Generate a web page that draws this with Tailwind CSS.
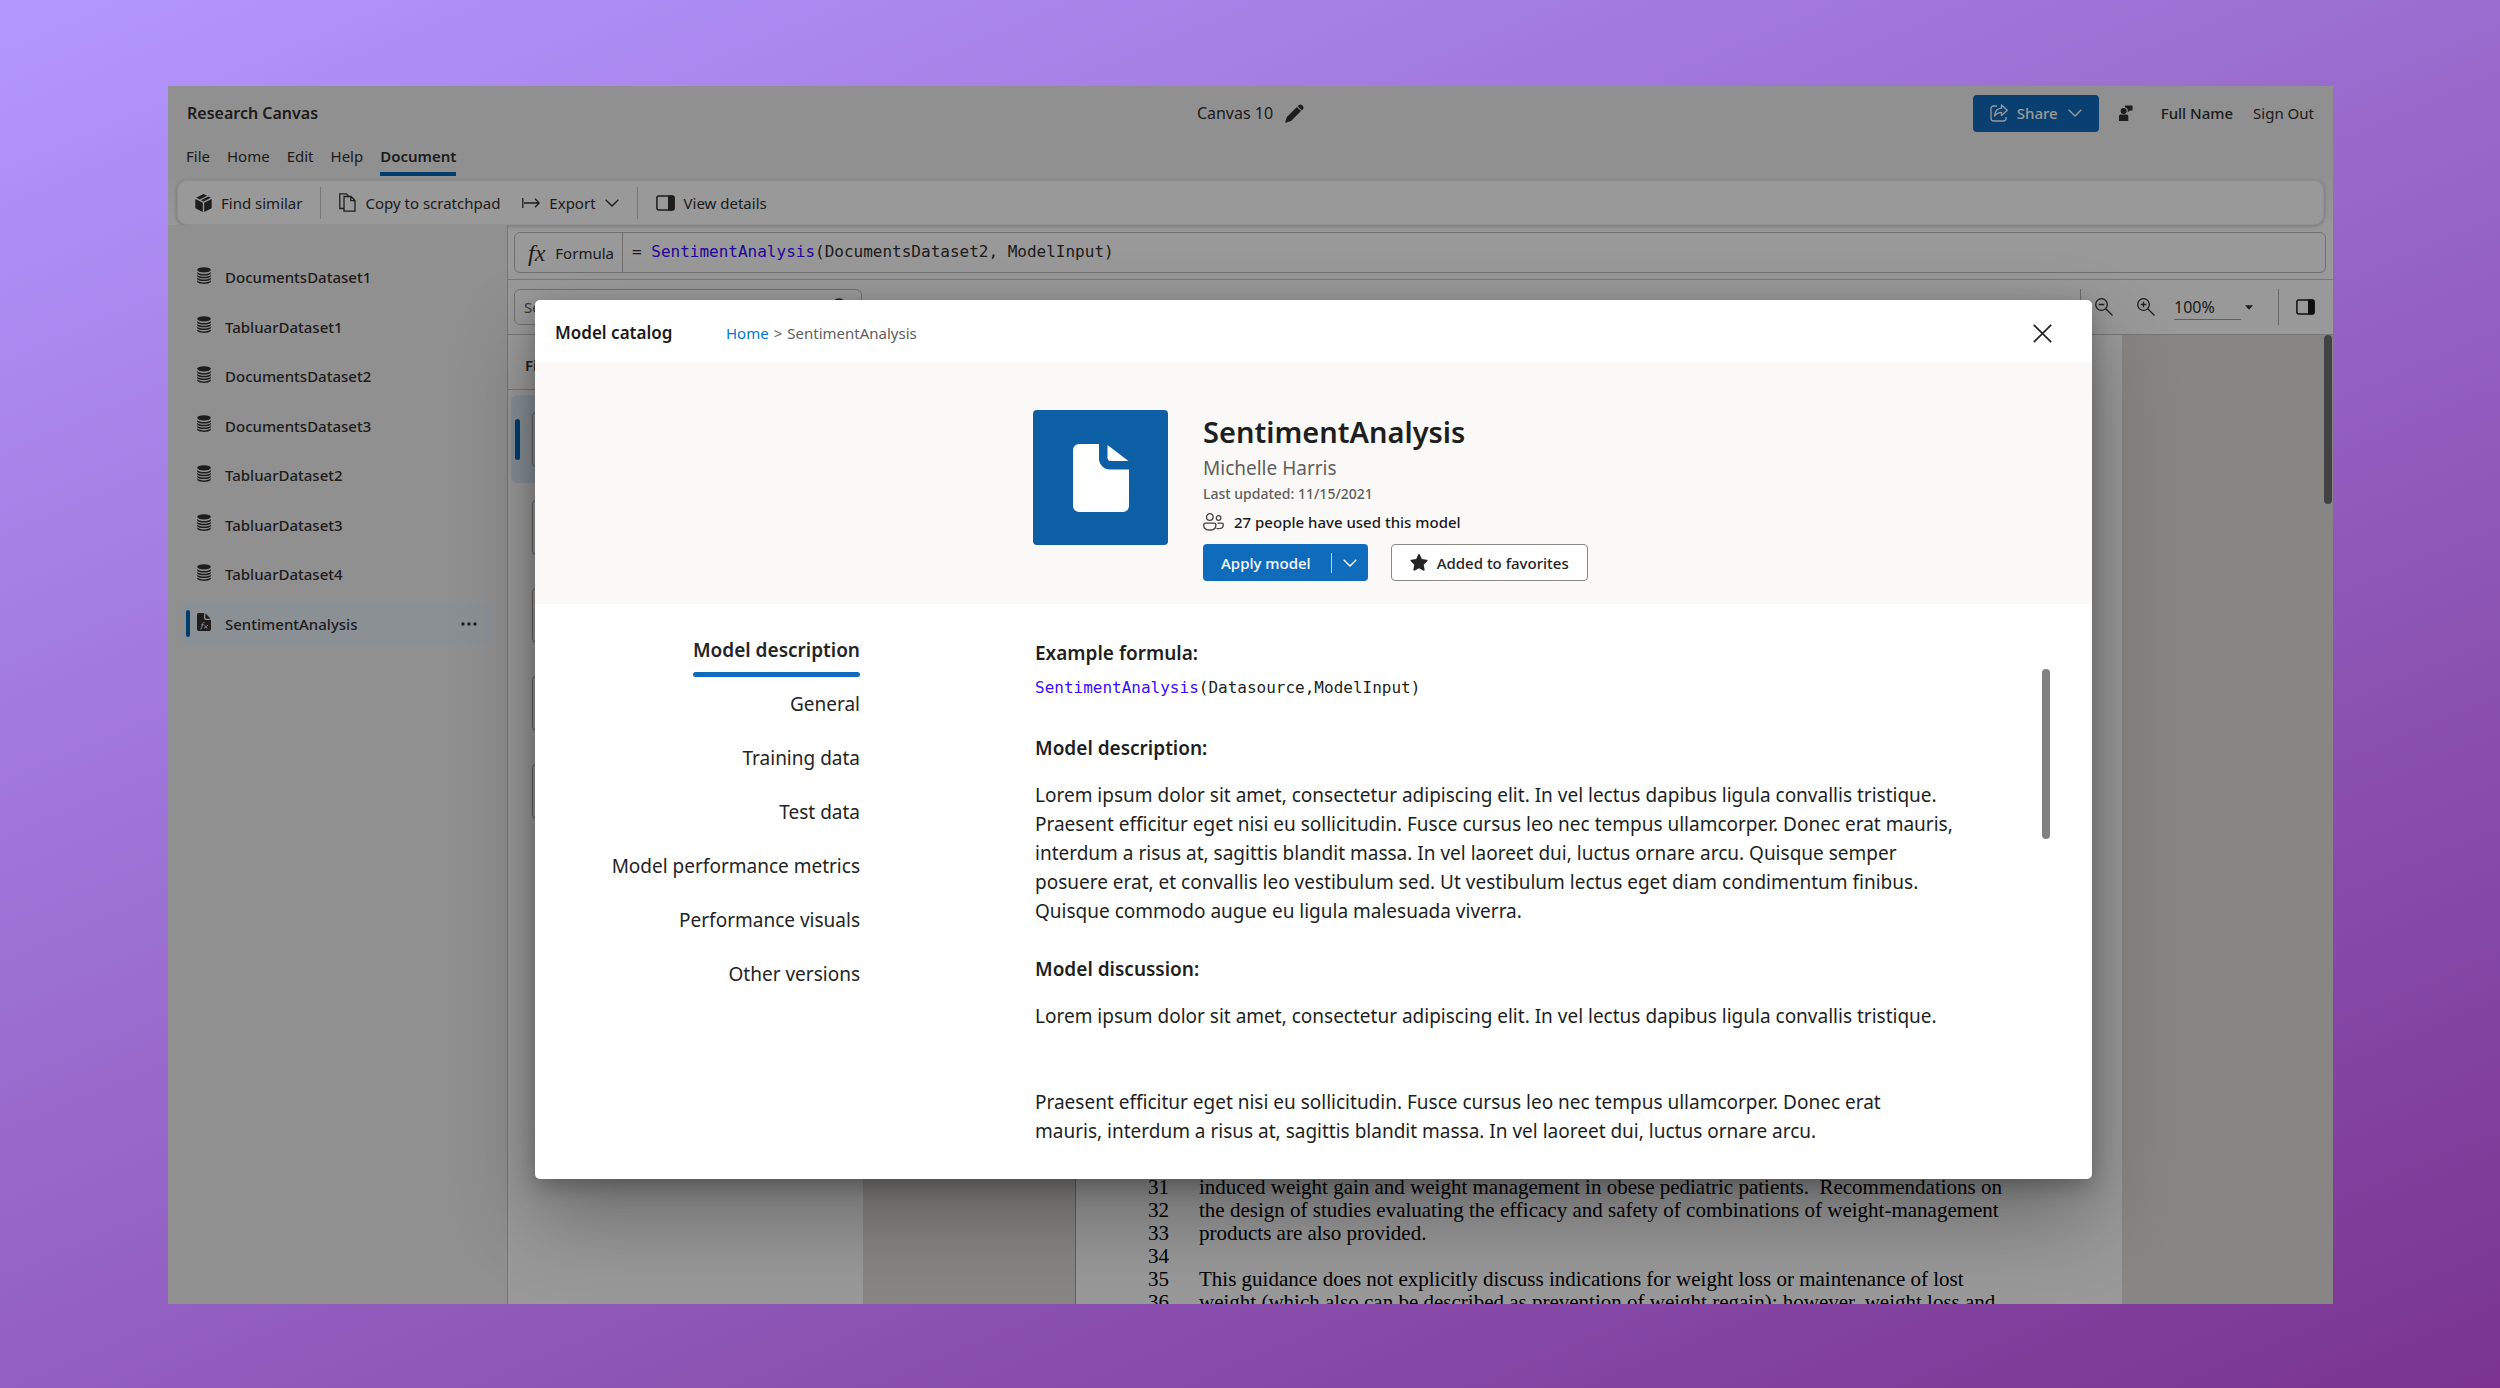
<!DOCTYPE html>
<html lang="en">
<head>
  <meta charset="UTF-8" />
  <meta name="viewport" content="width=device-width, initial-scale=1.0"/>
  <title>Research Canvas</title>
  <script src="https://cdn.jsdelivr.net/npm/@tailwindcss/browser@4"></script>
</head>
<body class="h-screen flex pt-[86px] pb-[84px] pl-[168px] pr-[167px] overflow-hidden bg-[linear-gradient(157deg,#b397ff,#7a3490)] font-['Segoe_UI','Noto_Sans',sans-serif] text-[15px] leading-5 text-[#323130]">

  <!-- Icons -->
  <svg class="hidden">
    <symbol id="i-db" viewBox="0 0 14 17">
      <ellipse cx="7" cy="2.8" rx="6.8" ry="2.6"/>
      <path d="M.2 4.900c1 1.500 3.700 2.100 6.800 2.100s5.800-.6 6.800-2.100v1.300c0 1.400-3 2.300-6.800 2.300S.2 7.600.2 6.200z"/>
      <path d="M.2 7.700C1.200 9.200 3.900 9.800 7 9.800s5.800-.6 6.800-2.100V9c0 1.400-3 2.300-6.800 2.300S.2 10.400.2 9z"/>
      <path d="M.2 10.500c1 1.500 3.700 2.100 6.800 2.100s5.800-.6 6.800-2.100v1.300c0 1.400-3 2.300-6.800 2.300S.2 13.200.2 11.800z"/>
      <path d="M.2 13.300c1 1.500 3.700 2.100 6.800 2.100s5.800-.6 6.800-2.100v1.300c0 1.400-3 2.300-6.800 2.300S.2 16 .2 14.600z"/>
    </symbol>
    <symbol id="i-chevron" viewBox="0 0 14 8">
      <path d="M.7.7 7 7 13.300.7" fill="none" stroke="currentColor" stroke-width="1.400"/>
    </symbol>
    <symbol id="i-panel" viewBox="0 0 19 16">
      <rect x=".9" y=".9" width="17.200" height="14.200" rx="2" fill="none" stroke="currentColor" stroke-width="1.500"/>
      <path d="M12 .5h4.500a2 2 0 0 1 2 2v11a2 2 0 0 1-2 2H12z"/>
    </symbol>
  </svg>

  <div class="relative flex-1 min-w-0 flex flex-col bg-white overflow-hidden">

    <header class="shrink-0 bg-[linear-gradient(#f0f0f0_60%,#fdfdfd)] pl-[9px] pr-[9px]">
      <div class="grid grid-cols-3 items-center h-[54px] px-[10px]">
        <h1 class="text-base font-semibold">Research Canvas</h1>
        <div class="flex items-center justify-center gap-3 text-base">
          <span>Canvas 10</span>
          <button aria-label="Rename canvas"><svg class="size-[19px] fill-current" viewBox="0 0 19 19"><path d="M13.600 1.300a3 3 0 0 1 4.200 4.200l-.9.900-4.200-4.200zM11.900 3 1.900 13 .2 18.200c-.1.400.2.700.6.600L6 17.100l10-10z"/></svg></button>
        </div>
        <div class="flex items-center justify-end">
          <button class="flex items-center h-[37px] px-[17px] rounded-[4px] bg-[#0f6cbd] text-white font-medium">
            <svg class="size-[18px] mr-[9px]" viewBox="0 0 18 18" fill="none" stroke="currentColor" stroke-width="1.300" stroke-linejoin="round"><path d="M7 2H3.500A2.500 2.500 0 0 0 1 4.500v10A2.500 2.500 0 0 0 3.500 17h10a2.500 2.500 0 0 0 2.500-2.500V13"/><path d="M11.500 1v3.200C7.500 4.500 5 7.300 4.500 12c2-2.500 4-3.600 7-3.700v3.300L17.300 6.300z"/></svg>
            Share
            <svg class="w-[14px] h-2 ml-[10px]"><use href="#i-chevron"/></svg>
          </button>
          <button aria-label="Feedback" class="ml-5 mr-7"><svg class="w-[14px] h-4 fill-current" viewBox="0 0 14 16"><circle cx="4.600" cy="6" r="3"/><path d="M1.500 9.500h6.300a1.500 1.500 0 0 1 1.500 1.500v5H0v-5a1.500 1.500 0 0 1 1.500-1.500zM6 .5h7.500v5H11L8.700 7.300V4.200A3.800 3.800 0 0 0 6 2.300z"/></svg></button>
          <a href="#" class="font-medium mr-5">Full Name</a>
          <a href="#">Sign Out</a>
        </div>
      </div>

      <nav class="flex gap-[17px] h-10 pl-[9px] pt-[6px]">
        <a href="#">File</a>
        <a href="#">Home</a>
        <a href="#">Edit</a>
        <a href="#">Help</a>
        <a href="#" class="h-[30px] font-semibold border-b-4 border-[#0067b8]">Document</a>
      </nav>

      <div class="flex items-center h-[45px] rounded-[10px] bg-white border border-[#f0f0f0] shadow-[0_1px_4px_rgba(0,0,0,0.25)] pl-[17px]">
        <button class="flex items-center gap-[9px]">
          <svg class="w-[17px] h-[18px] fill-current" viewBox="0 0 17 18"><path d="M8.500 0l3.600 1.800L4.800 5.600 1.200 3.800zM13.400 2.400l2.400 1.400L8.500 7.500 6 6.200zM.3 5l7.500 3.800V18L.9 14.500a1 1 0 0 1-.6-.9zM16.700 5v8.600a1 1 0 0 1-.6.9L9.200 18V8.800z"/></svg>
          Find similar
        </button>
        <span class="w-px h-8 bg-[#c8c6c4] mx-[18px]"></span>
        <button class="flex items-center gap-[9px]">
          <svg class="w-[17px] h-[19px]" viewBox="0 0 17 19" fill="none" stroke="currentColor" stroke-width="1.300"><path d="M5 15.500H.8V.8h6.600l2 2"/><path d="M5 3.500h7l4 4v10.700H5zM11.800 3.700v4h4"/></svg>
          Copy to scratchpad
        </button>
        <button class="flex items-center gap-[9px] ml-[22px]">
          <svg class="w-[18px] h-[10px]" viewBox="0 0 18 10" fill="none" stroke="currentColor" stroke-width="1.300"><path d="M.8 0v10M2 5h15M13 .8 17.200 5 13 9.200"/></svg>
          Export
          <svg class="w-[14px] h-2"><use href="#i-chevron"/></svg>
        </button>
        <span class="w-px h-8 bg-[#c8c6c4] mx-[18px]"></span>
        <button class="flex items-center gap-[9px]">
          <svg class="w-[19px] h-4 fill-current"><use href="#i-panel"/></svg>
          View details
        </button>
      </div>
    </header>

    <div class="flex-1 min-h-0 flex">

      <aside class="w-[340px] shrink-0 bg-[#f0f0f0] border-r border-[#c8c6c4] pl-[13px] pr-4 pt-[30px]">
        <ul id="datasets" class="flex flex-col justify-between h-[391px] font-medium"></ul>
      </aside>

      <main class="flex-1 min-w-0 flex flex-col">
        <div class="shrink-0 border-b border-[#c8c6c4] h-[55px] pt-[7px] pl-[6px] pr-[7px]">
          <div class="flex h-[41px] rounded-[6px] border border-[#bdbbb9]">
            <label for="formula" class="flex items-center gap-[10px] w-[108px] pl-[13px] border-r border-[#bdbbb9]">
              <i class="font-['Liberation_Serif',serif] text-2xl leading-6">fx</i>Formula
            </label>
            <div id="formula" contenteditable="true" spellcheck="false" class="flex-1 pl-[9px] leading-[38px] font-['DejaVu_Sans_Mono',monospace] text-base whitespace-pre">= <span class="text-[#390dfd]">SentimentAnalysis</span>(DocumentsDataset2, ModelInput)</div>
          </div>
        </div>

        <div class="shrink-0 flex items-center h-[55px] border-b border-[#c8c6c4] pl-[6px] pr-[18px]">
          <div class="flex items-center w-[348px] h-9 rounded-[6px] border border-[#bdbbb9] pl-[9px] pr-[15px]">
            <input type="search" aria-label="Search" placeholder="Search" class="flex-1 min-w-0 outline-none placeholder:text-[#605e5c]" />
            <svg class="size-[18px]" viewBox="0 0 18 18" fill="none" stroke="currentColor" stroke-width="1.500"><circle cx="11" cy="7" r="6"/><path d="M7 11.500 1 17"/></svg>
          </div>
          <span class="w-px h-9 bg-[#b3b0ad] ml-auto mr-[14px]"></span>
          <button aria-label="Zoom out"><svg class="size-[18px]" viewBox="0 0 18 18" fill="none" stroke="currentColor" stroke-width="1.300"><circle cx="6.500" cy="6.500" r="5.800"/><path d="M10.700 10.700l6.800 6.800M3.700 6.500h5.600"/></svg></button>
          <button aria-label="Zoom in" class="ml-6"><svg class="size-[18px]" viewBox="0 0 18 18" fill="none" stroke="currentColor" stroke-width="1.300"><circle cx="6.500" cy="6.500" r="5.800"/><path d="M10.700 10.700l6.800 6.800M3.700 6.500h5.600M6.500 3.700v5.600"/></svg></button>
          <select aria-label="Zoom level" class="appearance-none w-[67px] h-[26px] ml-[19px] border-b border-[#a19f9d] text-base"><option>100%</option><option>150%</option></select>
          <svg class="w-2 h-[5px] ml-[4px] fill-current" viewBox="0 0 8 5"><path d="M0 .3h8L4 4.700z"/></svg>
          <span class="w-px h-9 bg-[#b3b0ad] ml-[25px] mr-[17px]"></span>
          <button aria-label="Toggle panel" class="text-[#1b1a19]"><svg class="w-[19px] h-4 fill-current"><use href="#i-panel"/></svg></button>
        </div>

        <div class="flex-1 min-h-0 flex">
          <section class="w-[355px] shrink-0 bg-white">
            <h2 class="h-[55px] border-b border-[#c8c6c4] pl-[17px] leading-[60px] font-semibold">File</h2>
            <ul class="flex flex-col pt-[5px] pl-[3px]">
              <li class="flex items-center h-[88px] pl-[4px] gap-[12px] rounded-[6px] bg-[#e1effa]"><span class="w-[5px] h-[41px] rounded-full bg-[#0067b8]"></span><span class="w-[60px] h-[55px] rounded-[4px] border border-[#a19f9d]"></span></li>
              <li class="flex items-center h-[88px] pl-[21px]"><span class="w-[60px] h-[55px] rounded-[4px] border border-[#a19f9d]"></span></li>
              <li class="flex items-center h-[88px] pl-[21px]"><span class="w-[60px] h-[55px] rounded-[4px] border border-[#a19f9d]"></span></li>
              <li class="flex items-center h-[88px] pl-[21px]"><span class="w-[60px] h-[55px] rounded-[4px] border border-[#a19f9d]"></span></li>
              <li class="flex items-center h-[88px] pl-[21px]"><span class="w-[60px] h-[55px] rounded-[4px] border border-[#a19f9d]"></span></li>
            </ul>
          </section>

          <section class="relative flex-1 min-w-0 flex bg-[#e1dfdd] pl-[212px] pr-[211px]">
            <article class="flex-1 min-w-0 flex flex-col justify-end overflow-hidden bg-white border-l border-[#a19f9d] pl-[72px] font-['Liberation_Serif',serif] text-[21px] text-black">
              <ol class="grid grid-cols-[51px_1fr] auto-rows-[23px] leading-[23px] -mb-[10px] whitespace-pre">
                <li class="contents"><span>31</span><span>induced weight gain and weight management in obese pediatric patients.  Recommendations on</span></li>
                <li class="contents"><span>32</span><span>the design of studies evaluating the efficacy and safety of combinations of weight-management</span></li>
                <li class="contents"><span>33</span><span>products are also provided.</span></li>
                <li class="contents"><span>34</span><span></span></li>
                <li class="contents"><span>35</span><span>This guidance does not explicitly discuss indications for weight loss or maintenance of lost</span></li>
                <li class="contents"><span>36</span><span>weight (which also can be described as prevention of weight regain); however, weight loss and</span></li>
              </ol>
            </article>
            <span class="absolute top-0 right-px w-2 h-[169px] rounded-full bg-[#6e6e6e]"></span>
          </section>
        </div>
      </main>
    </div>

    <!-- Model catalog dialog over the dimmed app -->
    <div class="absolute inset-0 bg-black/40">
      <div role="dialog" aria-labelledby="dialog-title" class="absolute left-[367px] right-[241px] top-[214px] bottom-[125px] flex flex-col rounded-[5px] overflow-hidden bg-white text-[#242424] shadow-[0_38px_84px_rgba(0,0,0,0.3),0_7px_21px_rgba(0,0,0,0.25)]">
        <div class="shrink-0 flex items-center h-[62px] pl-5 pr-10 pt-1">
          <h2 id="dialog-title" class="w-[171px] text-[17px] font-semibold text-[#1b1a19]">Model catalog</h2>
          <nav class="flex gap-[5px] text-[#605e5c]"><a href="#" class="text-[#0078d4]">Home</a><span>&gt;</span><span>SentimentAnalysis</span></nav>
          <button aria-label="Close" class="ml-auto"><svg class="size-[19px]" viewBox="0 0 19 19" fill="none" stroke="currentColor" stroke-width="1.700"><path d="M.8.8l17.400 17.400M18.200.8.8 18.200"/></svg></button>
        </div>

        <div class="shrink-0 flex gap-[35px] h-[242px] bg-[#faf9f8] pl-[498px] pt-[48px]">
          <div class="size-[135px] rounded-[4px] bg-[#0c5ea5] flex items-center justify-center">
            <svg class="w-[56px] h-[68px] fill-white" viewBox="0 0 56 68"><path d="M6 0h20v14.500A11 11 0 0 0 37 25.500h19V62a6 6 0 0 1-6 6H6a6 6 0 0 1-6-6V6a6 6 0 0 1 6-6z"/><path d="M34.500 1 55.500 17H38a3.500 3.500 0 0 1-3.500-3.500z"/></svg>
          </div>
          <div class="flex flex-col items-start">
            <h3 class="text-[29px] leading-[44px] font-semibold text-[#201f1e]">SentimentAnalysis</h3>
            <p class="text-[19px] leading-7 text-[#605e5c]">Michelle Harris</p>
            <p class="text-sm leading-6 text-[#605e5c] font-medium">Last updated: 11/15/2021</p>
            <p class="flex items-center gap-[10px] leading-8 text-[#1b1a19] font-medium">
              <svg class="w-[21px] h-[18px]" viewBox="0 0 21 18" fill="none" stroke="#424242" stroke-width="1.300"><circle cx="6.800" cy="4" r="3.300"/><circle cx="15.600" cy="5" r="2.300"/><path d="M2.300 10.200h9a1.600 1.600 0 0 1 1.600 1.700c0 3.200-2 5.100-6.100 5.100S.7 15.100.7 11.900a1.600 1.600 0 0 1 1.600-1.700zM14.500 10.200h4.300a1.500 1.500 0 0 1 1.500 1.500c0 2.400-1.900 4-4.700 4-.8 0-1.500-.1-2.100-.3"/></svg>
              27 people have used this model
            </p>
            <div class="flex gap-[23px] mt-[6px] font-medium">
              <div class="flex items-center h-[37px] rounded-[4px] bg-[#0f6cbd] text-white">
                <button class="h-full pl-[18px] pr-5">Apply model</button>
                <span class="w-px h-5 bg-white/70"></span>
                <button aria-label="More apply options" class="h-full px-[11px]"><svg class="w-[14px] h-2"><use href="#i-chevron"/></svg></button>
              </div>
              <button class="flex items-center gap-[9px] h-[37px] px-[18px] rounded-[4px] bg-white border border-[#8a8886]">
                <svg class="w-[18px] h-[18px] fill-current" viewBox="0 0 18 18"><path d="M8.200.6c.3-.7 1.300-.7 1.600 0l2 4.500 4.900.6c.8.100 1.100 1 .5 1.500l-3.500 3.500.9 4.900c.1.800-.7 1.400-1.400 1L9 14.300l-4.200 2.300c-.7.4-1.500-.2-1.400-1l.9-4.900L.8 7.200c-.6-.5-.3-1.400.5-1.500l4.900-.6z"/></svg>
                Added to favorites
              </button>
            </div>
          </div>
        </div>

        <div class="flex-1 min-h-0 flex text-[19px]">
          <nav class="w-[325px] shrink-0 flex flex-col items-end pt-[27px]">
            <a href="#" class="flex flex-col gap-[3px] h-[54px] leading-[38px] font-semibold">Model description<span class="h-[5px] rounded-full bg-[#0f6cbd]"></span></a>
            <a href="#" class="h-[54px] leading-[38px]">General</a>
            <a href="#" class="h-[54px] leading-[38px]">Training data</a>
            <a href="#" class="h-[54px] leading-[38px]">Test data</a>
            <a href="#" class="h-[54px] leading-[38px]">Model performance metrics</a>
            <a href="#" class="h-[54px] leading-[38px]">Performance visuals</a>
            <a href="#" class="h-[54px] leading-[38px]">Other versions</a>
          </nav>
          <div class="w-[920px] ml-[175px] pt-[35px] leading-[29px] text-[#201f1e]">
            <h4 class="font-semibold">Example formula:</h4>
            <p class="mt-[5px] font-['DejaVu_Sans_Mono',monospace] text-base leading-[29px]"><span class="text-[#390dfd]">SentimentAnalysis</span>(Datasource,ModelInput)</p>
            <h4 class="mt-8 font-semibold">Model description:</h4>
            <p class="mt-[18px]">Lorem ipsum dolor sit amet, consectetur adipiscing elit. In vel lectus dapibus ligula convallis tristique. Praesent efficitur eget nisi eu sollicitudin. Fusce cursus leo nec tempus ullamcorper. Donec erat mauris, interdum a risus at, sagittis blandit massa. In vel laoreet dui, luctus ornare arcu. Quisque semper posuere erat, et convallis leo vestibulum sed. Ut vestibulum lectus eget diam condimentum finibus. Quisque commodo augue eu ligula malesuada viverra.</p>
            <h4 class="mt-[29px] font-semibold">Model discussion:</h4>
            <p class="mt-[18px]">Lorem ipsum dolor sit amet, consectetur adipiscing elit. In vel lectus dapibus ligula convallis tristique.</p>
            <p class="mt-[57px]">Praesent efficitur eget nisi eu sollicitudin. Fusce cursus leo nec tempus ullamcorper. Donec erat<br>mauris, interdum a risus at, sagittis blandit massa. In vel laoreet dui, luctus ornare arcu.</p>
          </div>
          <span class="w-2 h-[170px] mt-[65px] ml-auto mr-[42px] rounded-full bg-[#808080]"></span>
        </div>
      </div>
    </div>
  </div>

  <script>
    const datasets = [
      "DocumentsDataset1", "TabluarDataset1", "DocumentsDataset2", "DocumentsDataset3",
      "TabluarDataset2", "TabluarDataset3", "TabluarDataset4"
    ];

    document.getElementById("datasets").innerHTML = datasets.map(name => `
      <li><a href="#" class="flex items-center h-11 pl-4 gap-[14px]">
        <svg class="w-[14px] h-[17px] mb-1 fill-current"><use href="#i-db"/></svg>${name}
      </a></li>`).join('') + `
      <li class="flex items-center h-11 rounded-[4px] bg-[#e8f1f9] pl-[5px] pr-[14px]">
        <span class="w-[4px] h-[27px] rounded-full bg-[#0067b8] mr-[7px]"></span>
        <a href="#" class="flex items-center gap-[14px]">
          <svg class="w-[14px] h-[18px] mb-1 fill-current" viewBox="0 0 14 18"><path d="M1.800 0H7v5a2 2 0 0 0 2 2h5v9.300a1.700 1.700 0 0 1-1.700 1.700H1.700A1.700 1.700 0 0 1 0 16.300V1.800A1.800 1.800 0 0 1 1.800 0z"/><path d="M8.300.3 13.700 5.700H9.500a1.200 1.200 0 0 1-1.200-1.200z"/><path d="M3 16c1.300.3 1.600-.6 1.900-2l.7-3c.3-1.200.8-1.700 1.800-1.400M4 11.800h2.800M7.500 12l2.800 3.500M11 12l-4 3.500" fill="none" stroke="#e8f1f9" stroke-width=".9"/></svg>SentimentAnalysis
        </a>
        <button aria-label="More options" class="ml-auto"><svg class="w-4 h-1 fill-current" viewBox="0 0 16 4"><circle cx="2" cy="2" r="1.700"/><circle cx="8" cy="2" r="1.700"/><circle cx="14" cy="2" r="1.700"/></svg></button>
      </li>`;
  </script>
</body>
</html>
